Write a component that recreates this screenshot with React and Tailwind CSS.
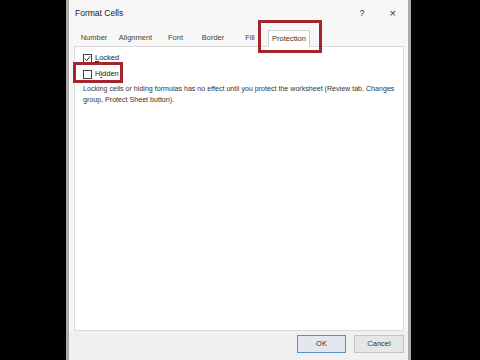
import React from 'react';

const tabs = [
  { label: 'Number', w: 'w-[38px]' },
  { label: 'Alignment', w: 'w-[45px]' },
  { label: 'Font', w: 'w-[35px]' },
  { label: 'Border', w: 'w-[40px]' },
  { label: 'Fill', w: 'w-[34px]' },
];

const Checkbox = ({ checked }) => (
  <span className="flex h-[9px] w-[9px] shrink-0 items-center justify-center border border-[#444] bg-white">
    {checked && (
      <svg width="7" height="7" viewBox="0 0 7 7">
        <path d="M0.8 3.6 L2.7 5.5 L6.2 1.2" fill="none" stroke="#333" strokeWidth="1" />
      </svg>
    )}
  </span>
);

const App = () => {
  return (
    <div className="flex h-[360px] w-[480px] bg-black font-['Liberation_Sans',sans-serif] text-[#222]">
      <div className="w-[66px] shrink-0" />

      <div className="relative flex w-[345px] shrink-0 flex-col border-x-[3px] border-[#a9a9a9] bg-[#f7f7f7]">
        {/* title bar */}
        <div className="flex h-[27px] items-center pl-[6px] pr-[12px]">
          <span className="text-[8.5px] text-[#1a1a1a]">Format Cells</span>
          <span className="ml-auto mr-[25px] text-[9px] text-[#333]">?</span>
          <span className="text-[11px] leading-none text-[#333]">×</span>
        </div>

        {/* tabs */}
        <div className="flex h-[19px] items-end pl-[6px]">
          {tabs.map((t) => (
            <div key={t.label} className={`${t.w} flex h-[17px] items-center justify-center text-[7.5px] text-[#444]`}>
              {t.label}
            </div>
          ))}
          <div className="relative top-[1px] ml-[1px] flex h-[17px] w-[42px] items-center justify-center border border-b-0 border-[#d0d0d0] bg-white text-[7.5px] text-[#333]">
            Protection
          </div>
        </div>

        {/* panel */}
        <div className="ml-[5px] mr-[4px] flex flex-1 flex-col border border-[#dadada] bg-white pl-[8px] pr-[3px] pt-[6px]">
          <div className="flex h-[10px] items-center gap-[3px] text-[7.5px]">
            <Checkbox checked />
            <span><u>L</u>ocked</span>
          </div>
          <div className="mt-[6px] flex h-[10px] items-center gap-[3px] text-[7.5px]">
            <Checkbox />
            <span>H<u>i</u>dden</span>
          </div>
          <p className="mt-[5px] whitespace-nowrap text-[7.1px] leading-[11px] text-[#333]">
            Locking cells or hiding formulas has no effect until you protect the worksheet (Review tab, Changes
            <br />
            group, Protect Sheet button).
          </p>
        </div>

        {/* footer */}
        <div className="flex h-[29px] shrink-0 items-start justify-end gap-[8px] bg-[#f0f0f0] pr-[4px] pt-[4px]">
          <button className="h-[18px] w-[49px] border border-[#5a8fc0] bg-[#e3e8ee] text-[7.5px] text-[#333]">OK</button>
          <button className="h-[18px] w-[50px] border border-[#c4c4c4] bg-[#e6e6e6] text-[7.5px] text-[#333]">Cancel</button>
        </div>

        {/* annotation boxes */}
        <div className="absolute left-[189px] top-[20px] h-[33px] w-[64px] border-[3px] border-[#a3262e]" />
        <div className="absolute left-[4px] top-[62px] h-[21px] w-[50px] border-[3px] border-[#a3262e]" />
      </div>

      <div className="flex-1" />
    </div>
  );
};

export default App;
